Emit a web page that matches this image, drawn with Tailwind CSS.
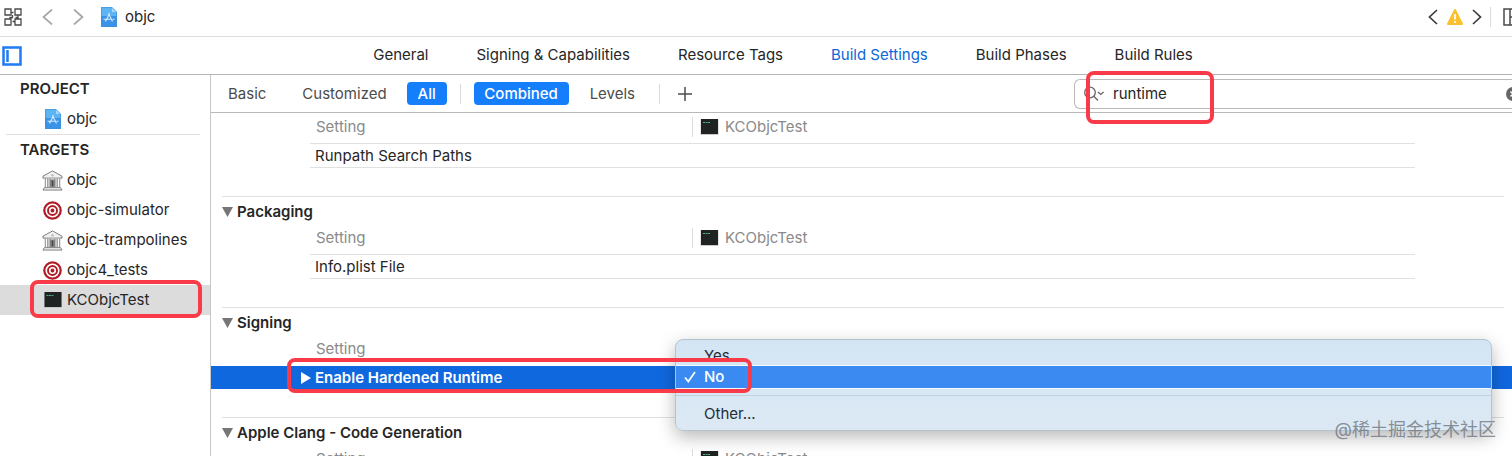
<!DOCTYPE html>
<html lang="en">
<head>
    <meta charset="UTF-8">
    <meta name="viewport" content="width=device-width, initial-scale=1.0">
    <title>objc - Build Settings</title>
    <script src="https://cdn.jsdelivr.net/npm/@tailwindcss/browser@4"></script>
</head>
<body class="relative flex flex-col h-screen overflow-hidden bg-white text-[#262626] text-[15px] leading-5 font-['Inter','Noto_Sans_CJK_SC',sans-serif]">
    <!-- Shared icons -->
    <svg class="hidden">
        <symbol id="terminal" viewBox="0 0 18 16">
            <rect width="18" height="16" fill="#c9c9c9"/>
            <rect x="0.5" width="17" height="15" fill="#1f2423"/>
            <path d="M2.5 3.5h2M5 3.5h2M7.5 3.5h2" stroke="#4fae7c" stroke-width="1"/>
        </symbol>
        <symbol id="project" viewBox="0 0 16 20">
            <path d="M0 0h11l5 5v15H0z" fill="#5db4f2"/>
            <path d="M0 9h16v11H0z" fill="#3a93e6"/>
            <path d="M11 0l5 5h-5z" fill="#a8d8fb"/>
            <path d="M8.600 6.500L4.500 14.500M7.400 6.500l4.100 8M2.500 12.200h7M11.500 12.200h2" stroke="#d9eeff" stroke-width="1.100" fill="none"/>
            <path d="M.5.5h10.500L15.500 5v14.500H.5z" fill="none" stroke="#3b8fd8" stroke-opacity=".6"/>
        </symbol>
        <symbol id="library" viewBox="0 0 22 22">
            <path d="M11 1L1 6.500v2h20v-2z" fill="#f1f1f1" stroke="#777" stroke-width="1"/>
            <circle cx="11" cy="5.500" r="1.300" fill="#bbb"/>
            <path d="M3 9h16v9H3z" fill="#ddd"/>
            <path d="M8.500 10h5v8h-5z" fill="#8d8585"/>
            <path d="M3.500 9v9M6 9v9M8.500 9v9M13.500 9v9M16 9v9M18.500 9v9" stroke="#777" stroke-width="1"/>
            <path d="M4.700 9.500v8.500M17.300 9.500v8.500" stroke="#fff" stroke-width="1.400"/>
            <path d="M2.500 18.500h17l1.500 2.500H1z" fill="#f4f4f4" stroke="#777" stroke-width="1"/>
            <path d="M11 11v6" stroke="#444" stroke-width="1.500"/>
        </symbol>
        <symbol id="target" viewBox="0 0 20 20">
            <circle cx="10" cy="10" r="9.800" fill="#b01c26"/>
            <circle cx="10" cy="10" r="6.600" fill="none" stroke="#fff" stroke-width="1.700"/>
            <circle cx="10" cy="10" r="2.900" fill="none" stroke="#fff" stroke-width="1.700"/>
        </symbol>
    </svg>

    <!-- Jump bar -->
    <header class="flex items-center shrink-0 h-[37px] pb-[2px] border-b border-[#dedede]">
        <button aria-label="Related items" class="ml-1">
            <svg class="w-[18px] h-[18px]" viewBox="0 0 18 18" fill="none" stroke="#4a4a4a" stroke-width="1.300">
                <path d="M1 1h6v6H1zM11 1h6v6h-6zM1 11h6v6H1zM11 11h6v6h-6zM7 4.500h2.500M14 7v2.500h-2.500M8.500 13.500H11M6 11V9.500h2.500V7"/>
            </svg>
        </button>
        <button aria-label="Back" class="ml-5">
            <svg class="w-[11px] h-4" viewBox="0 0 11 16" fill="none" stroke="#a6a6a6" stroke-width="1.700"><path d="M10 .5L1.500 8l8.500 7.500"/></svg>
        </button>
        <button aria-label="Forward" class="ml-5">
            <svg class="w-[11px] h-4" viewBox="0 0 11 16" fill="none" stroke="#a6a6a6" stroke-width="1.700"><path d="M1 .5L9.500 8L1 15.500"/></svg>
        </button>
        <a href="#" class="flex items-center gap-2 ml-[17px]">
            <svg class="w-4 h-5"><use href="#project"/></svg>
            objc
        </a>
        <div class="flex items-center ml-auto">
            <button aria-label="Previous issue">
                <svg class="w-[10px] h-4" viewBox="0 0 10 16" fill="none" stroke="#3c3c3c" stroke-width="1.700"><path d="M9 1L1.500 8L9 15"/></svg>
            </button>
            <button aria-label="Issues" class="ml-2">
                <svg class="w-[18px] h-[18px]" viewBox="0 0 18 18">
                    <path d="M9 2l7 14H2z" fill="#fcc02e" stroke="#fcc02e" stroke-width="2" stroke-linejoin="round"/>
                    <path d="M9 6v5.500M9 13v2" stroke="#fff" stroke-width="1.700"/>
                </svg>
            </button>
            <button aria-label="Next issue" class="ml-2">
                <svg class="w-[10px] h-4" viewBox="0 0 10 16" fill="none" stroke="#3c3c3c" stroke-width="1.700"><path d="M1 1l7.500 7L1 15"/></svg>
            </button>
            <div class="w-px h-5 ml-2 bg-[#dcdcdc]"></div>
            <button aria-label="Editor options" class="w-[9px] ml-3 overflow-hidden">
                <svg class="w-[20px] max-w-none h-[18px]" viewBox="0 0 20 18" fill="none" stroke="#4a4a4a" stroke-width="1.500"><path d="M1 1h18v16H1zM7 1v16M7 9h12"/></svg>
            </button>
        </div>
    </header>

    <!-- Editor tabs -->
    <nav class="flex items-center shrink-0 h-[38px] border-b border-[#b4b4b4]">
        <button aria-label="Toggle project list" class="ml-[2px]">
            <svg class="w-5 h-5" viewBox="0 0 20 20" fill="none" stroke="#1f7cf5"><path d="M1.500 1.500h17v17h-17z" stroke-width="2.500"/><path d="M5.500 4v12" stroke-width="2.500"/></svg>
        </button>
        <div class="flex flex-1 items-center justify-center gap-12 pl-8 pb-[2px]">
            <a href="#">General</a>
            <a href="#">Signing &amp; Capabilities</a>
            <a href="#">Resource Tags</a>
            <a href="#" class="text-[#0a68d8]">Build Settings</a>
            <a href="#">Build Phases</a>
            <a href="#">Build Rules</a>
        </div>
    </nav>

    <div class="flex flex-1 min-h-0">
        <!-- Project and targets -->
        <aside class="w-[211px] shrink-0 border-r border-[#c6c6c6]">
            <h2 class="flex items-center h-7 pl-5 font-semibold">PROJECT</h2>
            <a href="#" class="flex items-center gap-[6px] h-[31px] pl-[45px]"><svg class="w-4 h-5"><use href="#project"/></svg>objc</a>
            <hr class="ml-[6px] mr-[10px] border-[#dfdfdf]">
            <h2 class="flex items-center h-[30px] pl-5 font-semibold">TARGETS</h2>
            <ul>
                <li><a href="#" class="flex items-center gap-1 h-[30px] pl-[42px]"><svg class="w-[21px] h-[21px]"><use href="#library"/></svg>objc</a></li>
                <li><a href="#" class="flex items-center gap-[5px] h-[30px] pl-[43px]"><svg class="w-[19px] h-[19px]"><use href="#target"/></svg>objc-simulator</a></li>
                <li><a href="#" class="flex items-center gap-1 h-[30px] pl-[42px]"><svg class="w-[21px] h-[21px]"><use href="#library"/></svg>objc-trampolines</a></li>
                <li><a href="#" class="flex items-center gap-[5px] h-[30px] pl-[43px]"><svg class="w-[19px] h-[19px]"><use href="#target"/></svg>objc4_tests</a></li>
                <li class="relative">
                    <a href="#" class="flex items-center gap-[5px] h-[30px] pl-11 bg-[#dcdcdc]"><svg class="w-[18px] h-4"><use href="#terminal"/></svg>KCObjcTest</a>
                    <div class="absolute left-[30px] right-2 -top-[5px] -bottom-[3px] border-4 border-[#f93b49] rounded-lg"></div>
                </li>
            </ul>
        </aside>

        <main class="flex-1 min-w-0">
            <!-- Filter bar -->
            <div class="flex items-center h-[38px] border-b border-[#b9b9b9] text-[#4c4c4c]">
                <button class="ml-[17px]">Basic</button>
                <button class="ml-9">Customized</button>
                <button class="ml-5 w-10 h-[23px] rounded bg-[#157efb] text-white font-medium">All</button>
                <div class="w-px h-5 ml-[13px] bg-[#d9d9d9]"></div>
                <button class="ml-[13px] w-[95px] h-[23px] rounded bg-[#157efb] text-white font-medium">Combined</button>
                <button class="ml-[21px]">Levels</button>
                <div class="w-px h-5 ml-6 bg-[#d9d9d9]"></div>
                <button aria-label="Add setting" class="ml-[17px]">
                    <svg class="w-4 h-4" viewBox="0 0 16 16" stroke="#4c4c4c" stroke-width="1.500"><path d="M8 1v14M1 8h14"/></svg>
                </button>
                <div class="relative flex items-center w-[438px] h-[30px] ml-auto pl-[9px] border border-r-0 border-[#b9b9b9] rounded-l-md">
                    <svg class="w-[21px] h-4" viewBox="0 0 21 16" fill="none" stroke="#666" stroke-width="1.300"><circle cx="6" cy="6.500" r="5.300"/><path d="M9.800 10.300l4.200 4.200M14 6l2.800 2.500L19.600 6"/></svg>
                    <input type="text" aria-label="Filter settings" value="runtime" class="flex-1 min-w-0 ml-2 text-[#262626] outline-none">
                    <button aria-label="Clear filter" class="w-[6px] overflow-hidden">
                        <svg class="w-[14px] max-w-none h-[14px]" viewBox="0 0 14 14"><circle cx="7" cy="7" r="7" fill="#666"/><path d="M4.500 4.500l5 5M9.500 4.500l-5 5" stroke="#fff" stroke-width="1.500"/></svg>
                    </button>
                    <div class="absolute left-[11px] -top-[9px] w-[128px] h-[53px] border-4 border-[#f93b49] rounded-lg pointer-events-none"></div>
                </div>
            </div>

            <!-- Runpath -->
            <section class="pt-[2px] pb-7">
                <table class="w-full table-fixed border-separate border-spacing-0">
                    <thead>
                        <tr class="h-7 text-left text-[#8a8a8a]">
                            <td class="w-[99px]"></td>
                            <th class="w-[382px] p-0 pb-1 pl-[6px] font-normal">Setting</th>
                            <th class="p-0 pb-1 font-normal"><div class="flex items-center gap-[6px] h-5 pl-[7px] border-l border-[#dcdcdc]"><svg class="w-[19px] h-4"><use href="#terminal"/></svg>KCObjcTest</div></th>
                            <td class="w-[97px]"></td>
                        </tr>
                    </thead>
                    <tbody>
                        <tr class="h-[25px]">
                            <td></td>
                            <td class="p-0 pl-[5px] border-y border-[#e0e0e0]">Runpath Search Paths</td>
                            <td class="border-y border-[#e0e0e0]"></td>
                            <td></td>
                        </tr>
                    </tbody>
                </table>
            </section>

            <!-- Packaging -->
            <section class="pb-7">
                <h3 class="flex items-center gap-1 h-[30px] ml-[11px] mr-2 border-t border-[#e0e0e0] font-semibold">
                    <svg class="w-[11px] h-[10px]" viewBox="0 0 11 10"><path d="M0 0h11L5.500 10z" fill="#767676"/></svg>Packaging
                </h3>
                <table class="w-full table-fixed border-separate border-spacing-0">
                    <thead>
                        <tr class="h-7 text-left text-[#8a8a8a]">
                            <td class="w-[99px]"></td>
                            <th class="w-[382px] p-0 pb-1 pl-[6px] font-normal">Setting</th>
                            <th class="p-0 pb-1 font-normal"><div class="flex items-center gap-[6px] h-5 pl-[7px] border-l border-[#dcdcdc]"><svg class="w-[19px] h-4"><use href="#terminal"/></svg>KCObjcTest</div></th>
                            <td class="w-[97px]"></td>
                        </tr>
                    </thead>
                    <tbody>
                        <tr class="h-[25px]">
                            <td></td>
                            <td class="p-0 pl-[5px] border-y border-[#e0e0e0]">Info.plist File</td>
                            <td class="border-y border-[#e0e0e0]"></td>
                            <td></td>
                        </tr>
                    </tbody>
                </table>
            </section>

            <!-- Signing -->
            <section class="relative pb-[27px]">
                <h3 class="flex items-center gap-1 h-[30px] ml-[11px] mr-2 border-t border-[#e0e0e0] font-semibold">
                    <svg class="w-[11px] h-[10px]" viewBox="0 0 11 10"><path d="M0 0h11L5.500 10z" fill="#767676"/></svg>Signing
                </h3>
                <table class="w-full table-fixed border-separate border-spacing-0">
                    <thead>
                        <tr class="h-7 text-left text-[#8a8a8a]">
                            <td class="w-[89px]"></td>
                            <th class="w-[392px] p-0 pb-1 pl-4 font-normal">Setting</th>
                            <td></td>
                        </tr>
                    </thead>
                    <tbody>
                        <tr class="h-[25px] bg-[#1068de] text-white font-semibold">
                            <td class="border-y border-white"></td>
                            <td class="p-0 border-y border-white"><div class="flex items-center gap-1 pl-px"><svg class="w-[10px] h-3" viewBox="0 0 10 12"><path d="M0 0l10 6L0 12z" fill="#fff"/></svg>Enable Hardened Runtime</div></td>
                            <td class="border-y border-white"></td>
                        </tr>
                    </tbody>
                </table>

                <!-- Value menu -->
                <div role="menu" class="absolute left-[464px] right-5 top-8 h-[92px] border border-[#b5c3cc] rounded-lg bg-linear-to-b from-[#d3e5f4] to-[#dce9f4] shadow-[0_6px_18px_rgba(0,0,0,0.28)] text-[#1f2d3a]">
                    <button role="menuitem" class="flex items-end w-full h-[25px] pl-7 overflow-hidden leading-[18px]">Yes</button>
                    <button role="menuitem" class="flex items-center w-full h-6 border-y border-[#f4faff] bg-[#3a8af1] pl-2 text-white font-medium">
                        <svg class="w-3 h-3 mr-2" viewBox="0 0 12 12" fill="none" stroke="#fff" stroke-width="1.700"><path d="M1 6.500l3.300 4L11 1"/></svg>No
                    </button>
                    <hr class="mt-[6px] border-[#c3d1de]">
                    <button role="menuitem" class="flex items-center w-full h-9 pl-7">Other...</button>
                </div>
                <div class="absolute left-[76px] top-[51px] w-[465px] h-[35px] border-4 border-[#f93b49] rounded-lg pointer-events-none"></div>
            </section>

            <!-- Code generation -->
            <section>
                <h3 class="flex items-center gap-1 h-[30px] ml-[11px] mr-2 border-t border-[#e0e0e0] font-semibold">
                    <svg class="w-[11px] h-[10px]" viewBox="0 0 11 10"><path d="M0 0h11L5.500 10z" fill="#767676"/></svg>Apple Clang - Code Generation
                </h3>
                <table class="w-full table-fixed border-separate border-spacing-0">
                    <thead>
                        <tr class="h-7 text-left text-[#8a8a8a]">
                            <td class="w-[99px]"></td>
                            <th class="w-[382px] p-0 pb-1 pl-[6px] font-normal">Setting</th>
                            <th class="p-0 pb-1 font-normal"><div class="flex items-center gap-[6px] h-5 pl-[7px] border-l border-[#dcdcdc]"><svg class="w-[19px] h-4"><use href="#terminal"/></svg>KCObjcTest</div></th>
                            <td class="w-[97px]"></td>
                        </tr>
                    </thead>
                </table>
            </section>
        </main>
    </div>

    <div class="absolute right-4 bottom-3 text-lg text-[#6f7780]/80">@稀土掘金技术社区</div>
</body>
</html>
